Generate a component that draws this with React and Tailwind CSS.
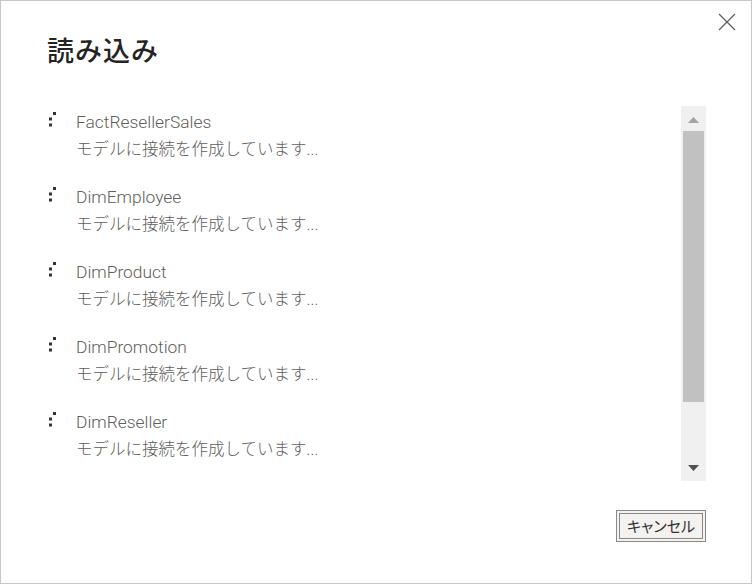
import React from "react";

const items = [
    "FactResellerSales",
    "DimEmployee",
    "DimProduct",
    "DimPromotion",
    "DimReseller",
];

function Spinner() {
    return (
        <svg width="10" height="18" viewBox="0 0 10 18" className="shrink-0">
            <rect x="6" y="2" width="3" height="3" fill="#333" />
            <rect x="2" y="7.5" width="3" height="3" fill="#333" />
            <rect x="2" y="13.5" width="3" height="3" fill="#333" />
        </svg>
    );
}

export default function App() {
    return (
        <div
            className="relative w-[752px] h-[584px] bg-white border border-[#c8c8c8] flex flex-col"
            style={{ fontFamily: "Roboto, 'Noto Sans CJK JP', sans-serif" }}
        >
            {/* Close */}
            <button className="absolute top-[11px] right-[15px] w-[19px] h-[19px] flex items-center justify-center">
                <svg width="18" height="18" viewBox="0 0 18 18">
                    <path d="M1 1L17 17M17 1L1 17" stroke="#605e5c" strokeWidth="1.2" />
                </svg>
            </button>

            {/* Title */}
            <h1 className="pl-[46px] pt-[33px] text-[27px] leading-[32px] font-medium text-[#252423] tracking-[1px] [font-family:'Noto_Sans_CJK_JP',sans-serif]">
                読み込み
            </h1>

            {/* Body */}
            <div className="flex pl-[46px] pr-[45px] mt-[40px]">
                <div className="flex-1 h-[375px] overflow-hidden pt-[3px] flex flex-col gap-[21px]">
                    {items.map((name) => (
                        <div key={name} className="flex">
                            <div className="w-[29px] pt-[1px]">
                                <Spinner />
                            </div>
                            <div className="text-[17.4px] leading-[26px] font-light text-[#605e5c]">
                                <div>{name}</div>
                                <div className="text-[16.5px] leading-[26px] pt-[2px]">
                                    モデルに接続を作成しています...
                                </div>
                            </div>
                        </div>
                    ))}
                </div>

                {/* Scrollbar */}
                <div className="w-[25px] h-[375px] bg-[#f0f0f0] flex flex-col items-center">
                    <div className="h-[25px] w-full flex items-center justify-center pt-[3px]">
                        <svg width="11" height="6" viewBox="0 0 11 6">
                            <path d="M5.5 0L11 6H0Z" fill="#a3a3a3" />
                        </svg>
                    </div>
                    <div className="w-[21px] h-[271px] bg-[#c1c1c1]" />
                    <div className="flex-1 w-full flex items-end justify-center pb-[10px]">
                        <svg width="11" height="6" viewBox="0 0 11 6">
                            <path d="M0 0H11L5.5 6Z" fill="#505050" />
                        </svg>
                    </div>
                </div>
            </div>

            {/* Footer */}
            <div className="flex justify-end pr-[45px] mt-[29px]">
                <button className="border border-[#8a8886] bg-[#f3f2f1] p-[2px]">
                    <span className="block border border-[#8a8886] h-[26px] px-[7px] text-[15px] leading-[24px] text-[#323130] [font-family:'Noto_Sans_CJK_JP',sans-serif] [font-feature-settings:'palt']">
                        キャンセル
                    </span>
                </button>
            </div>
        </div>
    );
}
